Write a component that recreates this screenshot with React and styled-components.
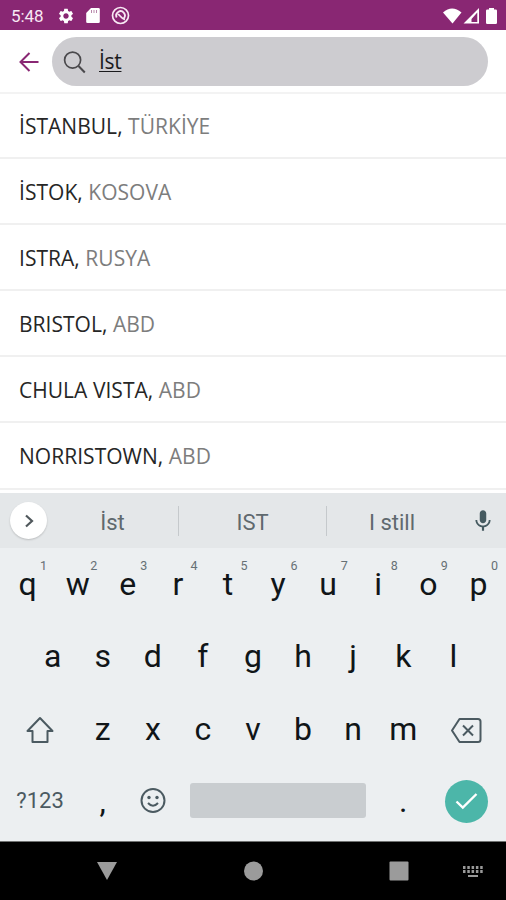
import React from 'react';
import styled, { createGlobalStyle } from 'styled-components';
import { MdSettings, MdMic } from 'react-icons/md';

const GlobalStyle = createGlobalStyle`
  * {
    box-sizing: border-box;
  }

  body {
    margin: 0;
    background: #ffffff;
    font-family: Roboto, sans-serif;
  }
`;

// Layout
const Screen = styled.div`
  display: flex;
  flex-direction: column;
  width: 506px;
  height: 900px;
  overflow: hidden;
  background: #ffffff;
`;

const StatusBar = styled.div`
  display: flex;
  align-items: center;
  justify-content: space-between;
  flex: none;
  height: 30px;
  padding: 1px 5px 0 11px;
  background: #892773;
  color: #ffffff;
`;

const StatusGroup = styled.div`
  display: flex;
  align-items: center;
  gap: ${(props) => props.$gap || 0}px;

  svg {
    display: block;
  }
`;

const Clock = styled.span`
  width: 46px;
  font-size: 17px;
  line-height: 28px;
  letter-spacing: -0.1px;
  color: #f8e9f4;
`;

// Search header
const Header = styled.header`
  display: flex;
  align-items: center;
  flex: none;
  height: 64px;
  padding: 0 18px 0 18px;
  border-bottom: 2px solid #f3f3f3;
`;

const BackButton = styled.button`
  width: 34px;
  height: 24px;
  padding: 0;
  border: 0;
  background: none;

  svg {
    display: block;
  }
`;

const SearchField = styled.div`
  display: flex;
  align-items: center;
  flex: 1;
  height: 49px;
  margin-top: 1px;
  padding-left: 11px;
  border-radius: 25px;
  background: #cdccd0;
`;

const Query = styled.span`
  margin: -2px 0 0 12px;
  font-family: 'Open Sans', sans-serif;
  font-size: 21px;
  line-height: 30px;
  letter-spacing: -0.3px;
  color: #1b1b1d;
  text-decoration: underline;
  text-decoration-thickness: 1px;
  text-underline-offset: 2px;
`;

// Results
const Results = styled.ul`
  flex: none;
  height: 399px;
  margin: 0;
  padding: 0;
  list-style: none;
  overflow: hidden;
`;

const Result = styled.li`
  height: 66.1px;
  padding: 0 19px;
  border-bottom: 2px solid #f0f0f0;
  font-family: 'Open Sans', sans-serif;
  font-size: 21px;
  line-height: 66px;
  letter-spacing: 0.03px;
  color: #262626;
  white-space: nowrap;

  &:first-child {
    margin-top: -1px;
  }
`;

const Country = styled.span`
  color: #7d7d7d;
`;

// Keyboard
const Suggestions = styled.div`
  display: flex;
  align-items: center;
  flex: none;
  height: 55px;
  padding-left: 10px;
  background: #e4e7e9;
`;

const ExpandButton = styled.button`
  display: flex;
  align-items: center;
  justify-content: center;
  flex: none;
  width: 37px;
  height: 37px;
  padding: 0;
  border: 0;
  border-radius: 50%;
  background: #ffffff;
  box-shadow: 0 1px 2px rgba(0, 0, 0, 0.18);
`;

const Suggestion = styled.span`
  flex: none;
  width: ${(props) => props.$width}px;
  height: 30px;
  padding-top: 3px;
  border-right: ${(props) => (props.$last ? 0 : 1)}px solid #c5c9cc;
  font-size: 22px;
  line-height: 27px;
  text-align: center;
  color: #5f696e;
`;

const MicButton = styled.div`
  display: flex;
  justify-content: center;
  flex: 1;
  padding-left: 3px;
  color: #455a60;
`;

const Keys = styled.div`
  display: flex;
  flex-direction: column;
  flex: none;
  height: 293px;
  padding: 0 2.5px;
  background: #eceff1;
`;

const KeyRow = styled.div`
  display: flex;
  justify-content: center;
  height: ${(props) => props.$height || 73}px;
`;

const Key = styled.div`
  position: relative;
  display: flex;
  align-items: center;
  justify-content: center;
  width: ${(props) => props.$width || 50.1}px;
  padding-top: ${(props) => props.$drop || 0}px;
  font-size: ${(props) => props.$size || 32}px;
  color: ${(props) => (props.$muted ? '#4b5a61' : '#101518')};
`;

const Hint = styled.sup`
  position: absolute;
  top: 10px;
  right: -1px;
  width: 20px;
  font-size: 12.5px;
  line-height: 16px;
  text-align: center;
  color: #667075;
`;

const SpaceBar = styled.div`
  width: 176px;
  height: 35px;
  border-radius: 3px;
  background: #c9cdd0;
`;

const EnterButton = styled.div`
  display: flex;
  align-items: center;
  justify-content: center;
  width: 43px;
  height: 43px;
  margin-left: 1px;
  border-radius: 50%;
  background: #4cb6a9;
`;

// System navigation
const NavBar = styled.nav`
  display: flex;
  align-items: center;
  flex: none;
  height: 59px;
  padding-left: 47px;
  border-top: 1px solid #707271;
  background: #000000;
`;

const NavItem = styled.div`
  display: flex;
  justify-content: center;
  flex: none;
  width: 120px;
  margin-right: ${(props) => (props.$last ? 4 : 26)}px;
`;

const results = [
  { city: 'İSTANBUL', country: 'TÜRKİYE' },
  { city: 'İSTOK', country: 'KOSOVA' },
  { city: 'ISTRA', country: 'RUSYA' },
  { city: 'BRISTOL', country: 'ABD' },
  { city: 'CHULA VISTA', country: 'ABD' },
  { city: 'NORRISTOWN', country: 'ABD' },
];

const topRow = 'qwertyuiop'.split('');
const homeRow = 'asdfghjkl'.split('');
const bottomRow = 'zxcvbnm'.split('');

const App = () => {
  return (
    <Screen>
      <GlobalStyle />
      <StatusBar>
        <StatusGroup>
          <Clock>5:48</Clock>
          <StatusGroup $gap={11}>
            <MdSettings size={18} />
            <svg width="14" height="17" viewBox="0 0 14 17">
              <path d="M5 1h7.500q1.300 0 1.300 1.300v12.400q0 1.300-1.300 1.300h-11q-1.300 0-1.300-1.300V6z" fill="#fff" />
              <path d="M5.500 3v3M8 3v3M10.500 3v3" stroke="#b887aa" strokeWidth="1" />
            </svg>
            <svg width="19" height="19" viewBox="0 0 19 19" fill="none" stroke="#f8e9f4">
              <circle cx="9.500" cy="9.500" r="8" strokeWidth="1.700" />
              <path d="M5.700 11.500A4.300 4.300 0 1 1 12.500 12.600" strokeWidth="1.800" />
              <path d="M6.500 8.500C9 8 9.500 12.500 14 13.500" strokeWidth="1.800" />
            </svg>
          </StatusGroup>
        </StatusGroup>
        <svg width="58" height="20" viewBox="0 0 58 20" fill="#fff">
          <path d="M0 6.500Q9 -1.500 18.500 6.500L9.500 17.500z" />
          <path fillRule="evenodd" d="M36 2v15.500H20.500zM34.300 6.500l-5.800 6.500v3h5.800z" />
          <path d="M46 2h5v1.500h1.700q1.300 0 1.300 1.300v11.900q0 1.300-1.300 1.300h-8.400q-1.300 0-1.300-1.300V4.800q0-1.300 1.300-1.300H46z" />
        </svg>
      </StatusBar>

      <Header>
        <BackButton aria-label="Back">
          <svg width="22" height="24" viewBox="0 0 22 24" fill="none" stroke="#892773" strokeWidth="2">
            <path d="M20.500 13H2.500M11.500 4l-9 9 9 9" />
          </svg>
        </BackButton>
        <SearchField>
          <svg width="24" height="24" viewBox="0 0 24 24" fill="none" stroke="#4a494c" strokeWidth="1.700">
            <circle cx="9.600" cy="10.100" r="8" />
            <path d="M15.500 16l6.300 6.500" strokeWidth="2" />
          </svg>
          <Query>İst</Query>
        </SearchField>
      </Header>

      <Results>
        {results.map((item) => (
          <Result key={item.city}>
            {item.city}, <Country>{item.country}</Country>
          </Result>
        ))}
      </Results>

      <Suggestions>
        <ExpandButton aria-label="More">
          <svg width="12" height="16" viewBox="0 0 12 16" fill="none" stroke="#50585c" strokeWidth="2.200">
            <path d="M3 2.500L9 8l-6 5.500" />
          </svg>
        </ExpandButton>
        <Suggestion $width={132}>İst</Suggestion>
        <Suggestion $width={148}>IST</Suggestion>
        <Suggestion $width={130} $last>I still</Suggestion>
        <MicButton>
          <MdMic size={26} />
        </MicButton>
      </Suggestions>

      <Keys>
        <KeyRow $height={71}>
          {topRow.map((letter, i) => (
            <Key key={letter}>
              {letter}
              <Hint>{(i + 1) % 10}</Hint>
            </Key>
          ))}
        </KeyRow>
        <KeyRow>
          {homeRow.map((letter) => (
            <Key key={letter}>{letter}</Key>
          ))}
        </KeyRow>
        <KeyRow>
          <Key $width={75.1} $drop={2} $muted>
            <svg width="28" height="28" viewBox="0 0 28 28" fill="none" stroke="#4b5a61" strokeWidth="2" strokeLinejoin="round">
              <path d="M14 2L26.500 15H21.500V26H6.500V15H1.500z" />
            </svg>
          </Key>
          {bottomRow.map((letter) => (
            <Key key={letter}>{letter}</Key>
          ))}
          <Key $width={75.1} $drop={3} $muted>
            <svg width="32" height="26" viewBox="0 0 32 26" fill="none" stroke="#4b5a61" strokeWidth="2" strokeLinejoin="round">
              <path d="M9.500 2H28q2.500 0 2.500 2.500v18q0 2.500-2.500 2.500H9.500L2 13.500z" />
              <path d="M13 8.500l10 10M23 8.500l-10 10" />
            </svg>
          </Key>
        </KeyRow>
        <KeyRow $height={71}>
          <Key $width={75.1} $size={22} $muted>?123</Key>
          <Key>,</Key>
          <Key $muted>
            <svg width="26" height="26" viewBox="0 0 26 26" fill="none" stroke="#4b5a61" strokeWidth="2">
              <circle cx="13" cy="12.500" r="11.500" />
              <circle cx="9" cy="9.500" r="1.700" fill="#4b5a61" stroke="none" />
              <circle cx="17" cy="9.500" r="1.700" fill="#4b5a61" stroke="none" />
              <path d="M8 15q5 5.500 10 0" />
            </svg>
          </Key>
          <Key $width={200.4}>
            <SpaceBar />
          </Key>
          <Key>.</Key>
          <Key $width={75.1} $drop={1}>
            <EnterButton>
              <svg width="23" height="18" viewBox="0 0 23 18" fill="none" stroke="#fff" strokeWidth="2.400">
                <path d="M1.500 9.500L7.800 15.500L21.500 2" />
              </svg>
            </EnterButton>
          </Key>
        </KeyRow>
      </Keys>

      <NavBar>
        <NavItem>
          <svg width="22" height="20" viewBox="0 0 22 20">
            <path d="M1 1h20L11 19z" fill="#9b9b9b" />
          </svg>
        </NavItem>
        <NavItem>
          <svg width="20" height="20" viewBox="0 0 20 20">
            <circle cx="10.500" cy="10" r="9.500" fill="#9b9b9b" />
          </svg>
        </NavItem>
        <NavItem $last>
          <svg width="20" height="20" viewBox="0 0 20 20">
            <rect x="0.500" y="0.500" width="19" height="19" rx="1" fill="#9b9b9b" />
          </svg>
        </NavItem>
        <svg width="20" height="13" viewBox="0 0 20 13" stroke="#999999" fill="none">
          <path d="M0 2.500h20M0 6.500h20" strokeWidth="3" strokeDasharray="2.500 1.800" />
          <path d="M5 11h10" strokeWidth="2" />
        </svg>
      </NavBar>
    </Screen>
  );
};

export default App;
